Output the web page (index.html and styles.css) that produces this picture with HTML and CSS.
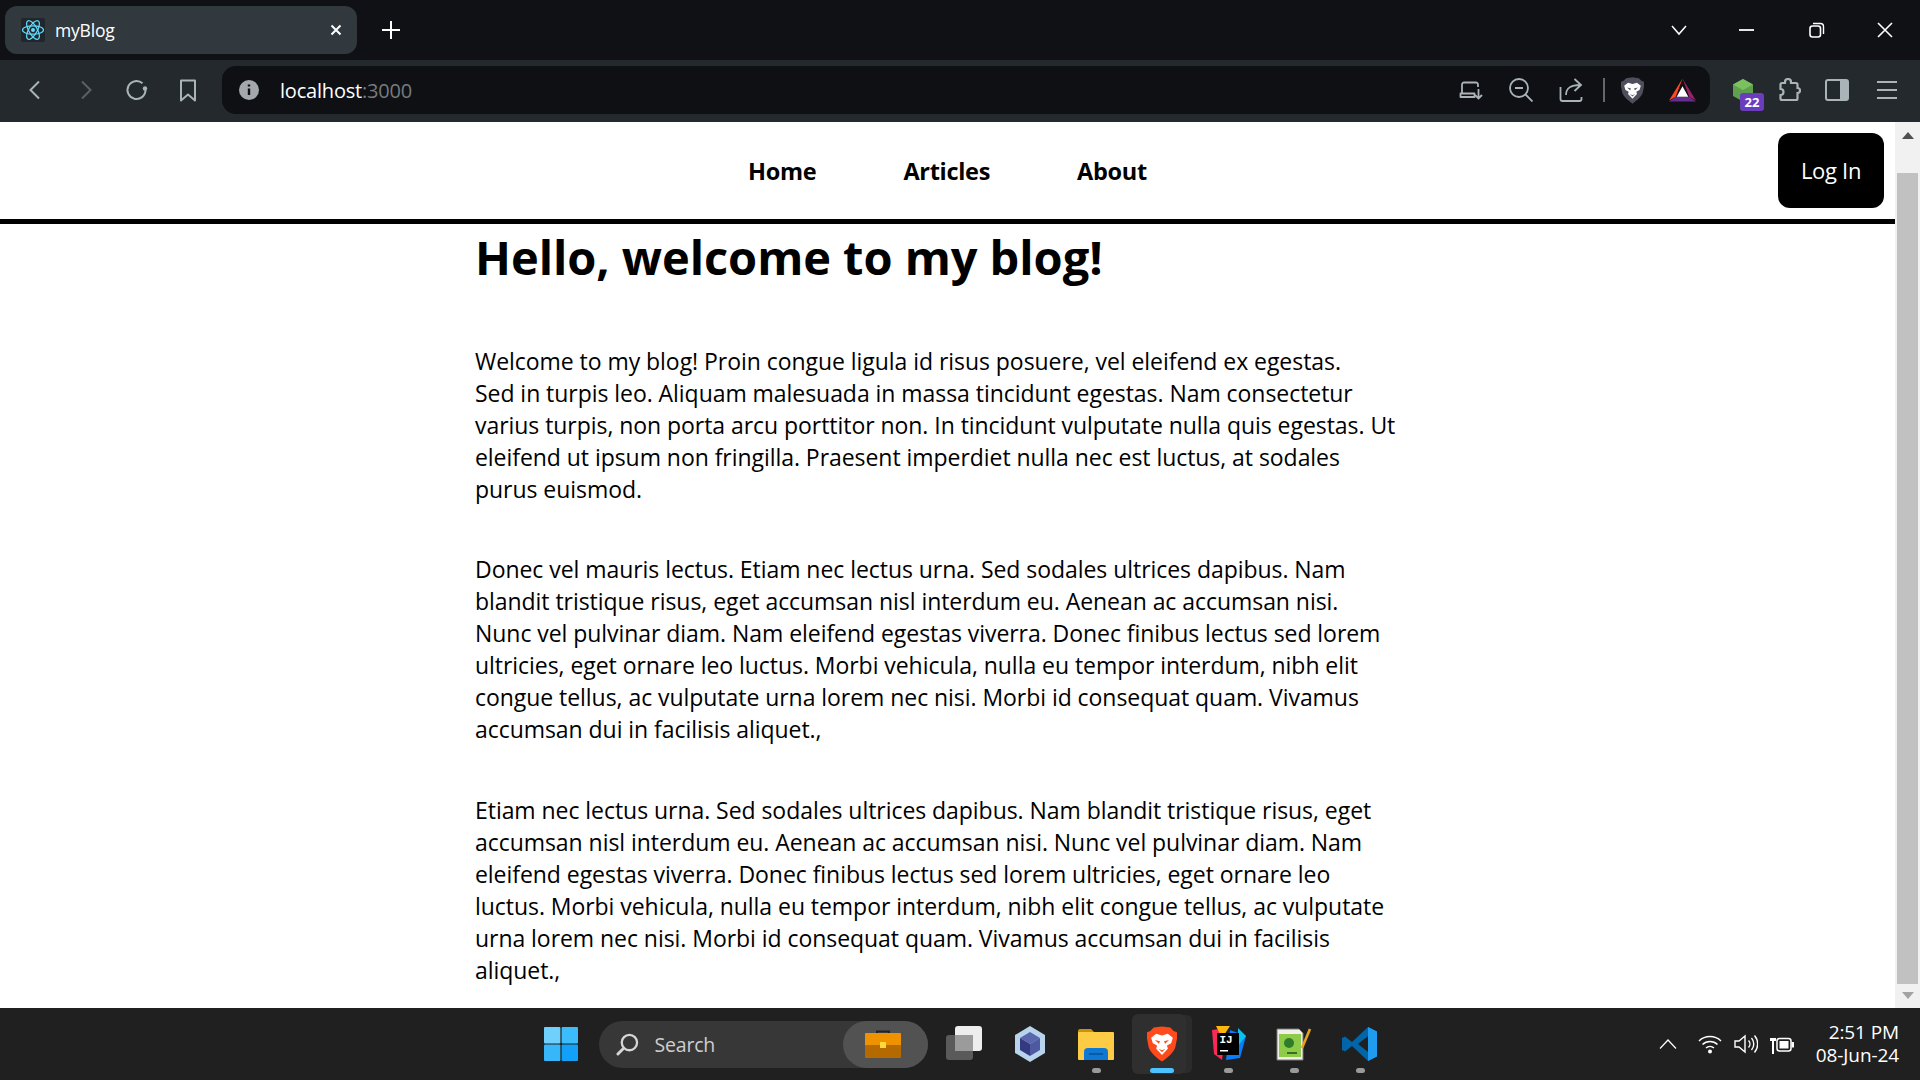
FILE: index.html
```html
<!DOCTYPE html>
<html lang="en">
<head>
    <meta charset="UTF-8">
    <meta name="viewport" content="width=device-width, initial-scale=1.0">
    <title>myBlog</title>
    <link rel="stylesheet" href="styles.css">
</head>
<body>
    <svg class="defs" width="0" height="0">
        <symbol id="lion" viewBox="3 0.500 18 23" preserveAspectRatio="none">
            <path fill="currentColor" d="M7 1.500 12 .8l5 .7 2 2.200 2 .8v4l-1 5.500C19 17.500 15 21 12 23.200 9 21 5 17.500 4 14L3 8.500v-4l2-.8z"/>
            <path fill="#fff" d="M5.500 8l3-2.500L12 6.500l3.500-1 3 2.500-1 3.500-2.500 1.500.5 2L12 19l-3.500-4 .5-2-2.500-1.500z"/>
            <path fill="currentColor" d="M7.800 9.500l3 .8-.7 1.500zM16.200 9.500l-3 .8.7 1.500zM10 15l2 1 2-1-2 2.200z"/>
        </symbol>
    </svg>

    <header class="tabstrip">
        <div class="tab">
            <svg class="favicon" viewBox="0 0 24 24">
                <rect width="24" height="24" rx="2" fill="#20262b"/>
                <g fill="none" stroke="#61dafb" stroke-width="1.200">
                    <ellipse cx="12" cy="12" rx="10.500" ry="4.200"/>
                    <ellipse cx="12" cy="12" rx="10.500" ry="4.200" transform="rotate(60 12 12)"/>
                    <ellipse cx="12" cy="12" rx="10.500" ry="4.200" transform="rotate(120 12 12)"/>
                </g>
                <circle cx="12" cy="12" r="2" fill="#61dafb"/>
            </svg>
            <span class="tab-title">myBlog</span>
            <svg class="tab-close" viewBox="0 0 12 12"><path d="M1.500 1.500l9 9M10.500 1.500l-9 9" stroke="#fff" stroke-width="2"/></svg>
        </div>
        <svg class="new-tab" viewBox="0 0 18 18"><path d="M9 0v18M0 9h18" stroke="#fff" stroke-width="2"/></svg>
        <div class="window-controls">
            <svg class="win-btn tab-list" viewBox="0 0 16 10"><path d="M1 1l7 8 7-8" fill="none" stroke="#fff" stroke-width="1.500"/></svg>
            <svg class="win-btn win-min" viewBox="0 0 16 16"><path d="M0 8h15" stroke="#fff" stroke-width="1.800"/></svg>
            <svg class="win-btn win-max" viewBox="0 0 16 16"><rect x="1" y="4" width="10.500" height="11" rx="2.500" fill="none" stroke="#fff" stroke-width="1.600"/><path d="M4 1.500h7.500A3 3 0 0 1 14.500 4.500V12" fill="none" stroke="#fff" stroke-width="1.400"/></svg>
            <svg class="win-btn win-close" viewBox="0 0 16 16"><path d="M1 1l14 14M15 1L1 15" stroke="#fff" stroke-width="1.600"/></svg>
        </div>
    </header>

    <div class="toolbar">
        <div class="nav-buttons">
            <svg class="tool" viewBox="0 0 24 24"><path d="M16 3.500 7.500 12l8.500 8.500" fill="none" stroke="#a9b3b8" stroke-width="2"/></svg>
            <svg class="tool" viewBox="0 0 24 24"><path d="M8 3.500 16.500 12 8 20.500" fill="none" stroke="#596166" stroke-width="2"/></svg>
            <svg class="tool" viewBox="0 0 24 24"><path d="M20.500 12a9 9 0 1 1-3-6.700" fill="none" stroke="#a9b3b8" stroke-width="2"/><circle cx="20" cy="10.500" r="2.200" fill="#a9b3b8"/></svg>
            <svg class="tool" viewBox="0 0 24 24"><path d="M5 2.500h14v20l-7-6-7 6z" fill="none" stroke="#a9b3b8" stroke-width="2" stroke-linejoin="round"/></svg>
        </div>
        <div class="addressbar">
            <svg class="info" viewBox="0 0 20 20"><circle cx="10" cy="10" r="10" fill="#a3a8ac"/><path d="M10 8.500v6.500M10 4.500v2" stroke="#0e1014" stroke-width="2.400"/></svg>
            <span class="url">localhost<span class="url-port">:3000</span></span>
            <div class="address-actions">
                <svg class="tool" viewBox="0 0 24 24"><path d="M19 9V6.500a2 2 0 0 0-2-2H5a2 2 0 0 0-2 2V15M1.500 15.500h14v3.500h-14z" fill="none" stroke="#a9b3b8" stroke-width="1.800" stroke-linejoin="round"/><path d="M19.500 11v9M16 17l3.500 3.500L23 17" fill="none" stroke="#a9b3b8" stroke-width="1.800"/></svg>
                <svg class="tool" viewBox="0 0 24 24"><circle cx="10" cy="10" r="9" fill="none" stroke="#a9b3b8" stroke-width="1.800"/><path d="M6 10h8M16.500 16.500l7 7" stroke="#a9b3b8" stroke-width="1.800"/></svg>
                <svg class="tool" viewBox="0 0 24 24"><path d="M1.500 9v12a2 2 0 0 0 2 2h17a2 2 0 0 0 2-2v-2M7 17c0-7 5-10 14-10M15.500 1l6.500 6-6.500 6" fill="none" stroke="#a9b3b8" stroke-width="1.800"/></svg>
                <span class="address-divider"></span>
                <svg class="shield"><use href="#lion"/></svg>
                <svg class="bat" viewBox="0 0 28 24">
                    <path fill="#ff4724" d="M14 0 0 23l7-4z"/>
                    <path fill="#9e1f63" d="M14 0l14 23-7-4z"/>
                    <path fill="#662d91" d="M0 24h28l-7-5H7z"/>
                    <path fill="#fff" d="M14 8l6 11H8z"/>
                </svg>
            </div>
        </div>
        <div class="extensions">
            <div class="ext-node">
                <svg class="node-hex" viewBox="0 0 24 24"><path fill="#5fa04e" d="M12 1l10 5.500V18l-10 5.500L2 18V6.500z"/><path fill="#7cc05f" d="M12 1l10 5.500L12 12 2 6.500z"/></svg>
                <span class="ext-badge">22</span>
            </div>
            <svg class="tool ext-puzzle" viewBox="0 0 24 24"><path d="M8 5V4a3 3 0 0 1 6 0v1h5a1.500 1.500 0 0 1 1.500 1.500V10a2.500 2.500 0 0 1 0 5v5.500A1.500 1.500 0 0 1 19 22H5a1.500 1.500 0 0 1-1.500-1.500V17a3 3 0 0 0 0-6V6.500A1.500 1.500 0 0 1 5 5z" fill="none" stroke="#a9b3b8" stroke-width="2.200"/></svg>
            <svg class="tool" viewBox="0 0 24 24"><rect x="1" y="2" width="22" height="20" rx="2" fill="none" stroke="#a9b3b8" stroke-width="2"/><rect x="15" y="2" width="8" height="20" fill="#a9b3b8"/></svg>
            <svg class="tool ext-menu" viewBox="0 0 24 24"><path d="M2 4h20M2 12h20M2 20h20" stroke="#a9b3b8" stroke-width="1.800"/></svg>
        </div>
    </div>

    <div class="viewport">
        <div class="page">
            <nav class="site-nav">
                <div class="nav-links">
                    <a href="#">Home</a>
                    <a href="#">Articles</a>
                    <a href="#">About</a>
                </div>
                <button class="login-btn" type="button">Log In</button>
            </nav>
            <main class="content">
                <h1>Hello, welcome to my blog!</h1>
                <p>Welcome to my blog! Proin congue ligula id risus posuere, vel eleifend ex egestas.<br>
                Sed in turpis leo. Aliquam malesuada in massa tincidunt egestas. Nam consectetur<br>
                varius turpis, non porta arcu porttitor non. In tincidunt vulputate nulla quis egestas. Ut<br>
                eleifend ut ipsum non fringilla. Praesent imperdiet nulla nec est luctus, at sodales<br>
                purus euismod.</p>
                <p>Donec vel mauris lectus. Etiam nec lectus urna. Sed sodales ultrices dapibus. Nam<br>
                blandit tristique risus, eget accumsan nisl interdum eu. Aenean ac accumsan nisi.<br>
                Nunc vel pulvinar diam. Nam eleifend egestas viverra. Donec finibus lectus sed lorem<br>
                ultricies, eget ornare leo luctus. Morbi vehicula, nulla eu tempor interdum, nibh elit<br>
                congue tellus, ac vulputate urna lorem nec nisi. Morbi id consequat quam. Vivamus<br>
                accumsan dui in facilisis aliquet.,</p>
                <p>Etiam nec lectus urna. Sed sodales ultrices dapibus. Nam blandit tristique risus, eget<br>
                accumsan nisl interdum eu. Aenean ac accumsan nisi. Nunc vel pulvinar diam. Nam<br>
                eleifend egestas viverra. Donec finibus lectus sed lorem ultricies, eget ornare leo<br>
                luctus. Morbi vehicula, nulla eu tempor interdum, nibh elit congue tellus, ac vulputate<br>
                urna lorem nec nisi. Morbi id consequat quam. Vivamus accumsan dui in facilisis<br>
                aliquet.,</p>
            </main>
        </div>
        <div class="scrollbar">
            <span class="arrow-up"></span>
            <span class="thumb"></span>
            <span class="arrow-down"></span>
        </div>
    </div>

    <footer class="taskbar">
        <div class="task-center">
            <div class="slot">
                <svg class="icon-34" viewBox="0 0 34 34">
                    <rect width="16.400" height="16.400" rx="1" fill="#6fd0fb"/>
                    <rect x="17.600" width="16.400" height="16.400" rx="1" fill="#3cbcfb"/>
                    <rect y="17.600" width="16.400" height="16.400" rx="1" fill="#38b6fa"/>
                    <rect x="17.600" y="17.600" width="16.400" height="16.400" rx="1" fill="#12a0f8"/>
                </svg>
            </div>
            <div class="search-pill">
                <svg class="search-icon" viewBox="0 0 24 24"><circle cx="14" cy="10" r="8" fill="none" stroke="#d6d6d6" stroke-width="2.400"/><path d="M8 16l-6 6" stroke="#d6d6d6" stroke-width="3" stroke-linecap="round"/></svg>
                <span class="search-text">Search</span>
                <div class="search-badge">
                    <svg class="briefcase" viewBox="0 0 36 28">
                        <path d="M12 4V1.500h12V4" fill="none" stroke="#222" stroke-width="2"/>
                        <rect y="3" width="36" height="13" rx="1" fill="#ee9200"/>
                        <rect y="15" width="36" height="13" rx="1" fill="#b56a00"/>
                        <rect x="15" y="12" width="6" height="6" fill="#ffd83a"/>
                    </svg>
                </div>
            </div>
            <div class="slot">
                <svg class="icon-36" viewBox="0 0 36 36">
                    <rect y="9" width="27" height="25" rx="3" fill="#5a5a5a"/>
                    <rect x="9" width="27" height="25" rx="3" fill="#eee"/>
                    <rect x="9" y="9" width="18" height="16" fill="#9b9b9b"/>
                </svg>
            </div>
            <div class="slot">
                <svg class="icon-36" viewBox="0 0 36 36">
                    <path fill="#b8d4ec" d="M18 0l15 9v18l-15 9-15-9V9z"/>
                    <path fill="#5b67ad" d="M18 6l10 6-10 6-10-6z"/>
                    <path fill="#353a80" d="M8 12l10 6v12l-10-6z"/>
                    <path fill="#4d59a0" d="M28 12l-10 6v12l10-6z"/>
                </svg>
            </div>
            <div class="slot running">
                <svg class="icon-36" viewBox="0 0 36 32">
                    <path fill="#c99400" d="M0 3a2 2 0 0 1 2-2h11l4 4h-17z"/>
                    <rect y="4" width="36" height="28" rx="1" fill="#fdcb44"/>
                    <path fill="#0f78d4" d="M6 32v-8a4 4 0 0 1 4-4h16a4 4 0 0 1 4 4v8z"/>
                    <path d="M11 26h14" stroke="#0a4f94" stroke-width="1.500"/>
                </svg>
            </div>
            <div class="slot active">
                <svg class="brave-tile"><use href="#lion"/></svg>
            </div>
            <div class="slot running">
                <svg class="icon-36" viewBox="0 0 36 36">
                    <path fill="#fe2857" d="M2 4l14-2-4 32-8-6z"/>
                    <path fill="#fdb60d" d="M6 0h14L12 12z"/>
                    <path fill="#087cfa" d="M20 4l16 6-6 22-14 2z"/>
                    <path fill="#07c3f2" d="M28 2l8 8-8 10z"/>
                    <rect x="7" y="7" width="22" height="22" fill="#000"/>
                    <text class="ij-label" x="9.500" y="17">IJ</text>
                    <rect x="10" y="24" width="8" height="1.500" fill="#fff"/>
                </svg>
            </div>
            <div class="slot running">
                <svg class="icon-36" viewBox="0 0 36 36">
                    <path fill="#f1f1ea" stroke="#777" d="M1 3h22l4 4v27H1z"/>
                    <rect x="3" y="8" width="22" height="23" fill="#8ecb48"/>
                    <circle cx="13" cy="17" r="5" fill="#2f7d2a"/>
                    <path d="M26 22L34 3" stroke="#e8a31d" stroke-width="2.600"/>
                    <path d="M11 27h10" stroke="#1d4d1a" stroke-width="1.500"/>
                </svg>
            </div>
            <div class="slot running">
                <svg class="icon-36" viewBox="0 0 36 36">
                    <path fill="#0065a9" d="M26 1l9 4.500v25L26 35 10 20 3 25.500 0 24V12l3-1.500L10 16zM26 10l-10 8 10 8z"/>
                    <path fill="#1f9cf0" d="M26 1l9 4.500v25L26 35z"/>
                </svg>
            </div>
        </div>
        <div class="tray">
            <svg class="tray-chevron" viewBox="0 0 18 10"><path d="M1 9.500l8-8.500 8 8.500" fill="none" stroke="#fff" stroke-width="1.200"/></svg>
            <svg class="tray-icon" viewBox="0 0 24 20"><path d="M1 7a16 16 0 0 1 22 0M4.500 10.500a11 11 0 0 1 15 0M8 14a6 6 0 0 1 8 0" fill="none" stroke="#fff" stroke-width="1.500"/><circle cx="12" cy="17.500" r="2" fill="#fff"/></svg>
            <svg class="tray-icon" viewBox="0 0 24 20"><path d="M1 7v6h4l6 5V2L5 7z" fill="none" stroke="#fff" stroke-width="1.400"/><path d="M14.500 6.500a5 5 0 0 1 0 7M17.500 4a9 9 0 0 1 0 12M20.500 1.500a13 13 0 0 1 0 17" fill="none" stroke="#fff" stroke-width="1.400"/></svg>
            <svg class="tray-icon" viewBox="0 0 24 20"><path d="M1 0v4M4.500 0v4M0 4h6v3H4v13H2V7H0z" fill="#fff"/><rect x="7" y="4.500" width="14" height="12.500" rx="2.500" fill="#202020" stroke="#fff" stroke-width="1.500"/><rect x="9.500" y="7" width="9" height="7.500" fill="#fff"/><rect x="21.500" y="8" width="2.500" height="5.500" fill="#fff"/></svg>
            <div class="clock">
                <span>2:51 PM</span>
                <span>08-Jun-24</span>
            </div>
        </div>
    </footer>
</body>
</html>
```

FILE: styles.css
```css
html, body {
    height: 100%;
    margin: 0;
}
body {
    font-family: "Open Sans", "Noto Sans", sans-serif;
    display: flex;
    flex-direction: column;
    height: 100vh;
    overflow: hidden;
    background: #fff;
}
.defs {
    position: absolute;
}
svg {
    display: block;
    flex: none;
}

/* browser top */
.tabstrip {
    height: 60px;
    flex: none;
    display: flex;
    align-items: flex-start;
    background: #0f1115;
    box-sizing: border-box;
    padding: 6px 0 0 5px;
}
.tab {
    width: 352px;
    height: 48px;
    border-radius: 12px;
    background: #32393e;
    display: flex;
    align-items: center;
    padding: 0 16px;
    box-sizing: border-box;
    color: #fff;
}
.favicon {
    width: 24px;
    height: 24px;
}
.tab-title {
    margin-left: 10px;
    font-size: 17.500px;
    letter-spacing: -0.2px;
}
.tab-close {
    width: 12px;
    height: 12px;
    margin-left: auto;
    margin-right: -1px;
}
.new-tab {
    width: 18px;
    height: 18px;
    margin: 15px 0 0 25px;
}
.window-controls {
    margin-left: auto;
    display: flex;
    align-items: center;
    height: 48px;
    padding-right: 27px;
}
.win-btn {
    width: 16px;
    height: 16px;
}
.tab-list {
    margin-right: 52px;
}
.win-min {
    margin-right: 54px;
}
.win-max {
    margin-right: 52px;
}

/* toolbar */
.toolbar {
    height: 62px;
    flex: none;
    display: flex;
    align-items: center;
    box-sizing: border-box;
    padding-bottom: 2px;
    background: #23292d;
}
.tool {
    width: 24px;
    height: 24px;
}
.nav-buttons {
    display: flex;
    gap: 27px;
    padding-left: 23px;
    width: 222px;
    box-sizing: border-box;
}
.addressbar {
    width: 1488px;
    height: 48px;
    border-radius: 14px;
    background: #0e1014;
    display: flex;
    align-items: center;
    padding-left: 17px;
    box-sizing: border-box;
}
.info {
    width: 20px;
    height: 20px;
}
.url {
    margin-left: 21px;
    font-size: 20px;
    letter-spacing: -0.2px;
    color: #fff;
}
.url-port {
    color: #777b7f;
}
.address-actions {
    margin-left: auto;
    display: flex;
    align-items: center;
    gap: 26px;
    padding-right: 14px;
}
.address-divider {
    width: 2px;
    height: 24px;
    background: #62686c;
    margin: 0 -10px 0 -6px;
}
.shield {
    width: 23px;
    height: 27px;
    color: #4d4f5c;
}
.bat {
    width: 27px;
    height: 24px;
    margin-left: -1px;
}
.extensions {
    display: flex;
    align-items: center;
    gap: 24px;
    padding-left: 21px;
}
.ext-puzzle {
    margin-left: -2px;
}
.ext-menu {
    margin-left: 2px;
}
.ext-node {
    position: relative;
    width: 24px;
    height: 24px;
}
.node-hex {
    width: 24px;
    height: 24px;
}
.ext-badge {
    position: absolute;
    left: 9px;
    top: 15px;
    width: 24px;
    height: 18px;
    border-radius: 3px;
    background: #6a3dbd;
    color: #fff;
    font-size: 13px;
    font-weight: 700;
    line-height: 18px;
    text-align: center;
}

/* page */
.viewport {
    flex: 1;
    min-height: 0;
    display: flex;
}
.page {
    flex: 1;
    min-width: 0;
    overflow: hidden;
    color: #000;
}
.site-nav {
    height: 102px;
    box-sizing: border-box;
    border-bottom: 5px solid #000;
    position: relative;
    display: flex;
    justify-content: center;
    align-items: center;
}
.nav-links {
    display: flex;
    gap: 87px;
}
.nav-links a {
    color: #000;
    font-size: 23.500px;
    font-weight: 700;
    text-decoration: none;
    letter-spacing: -0.3px;
}
.login-btn {
    position: absolute;
    right: 11px;
    top: 11px;
    width: 106px;
    height: 75px;
    padding: 0 0 2px;
    border: none;
    border-radius: 12px;
    background: #000;
    color: #fff;
    font-family: inherit;
    font-size: 22px;
    letter-spacing: -0.3px;
}
.content {
    margin-left: 475px;
}
.content h1 {
    margin: 1px 0 56px;
    font-size: 47px;
    line-height: 64px;
    font-weight: 700;
    letter-spacing: -0.05px;
    white-space: nowrap;
}
.content p {
    margin: 0 0 49px;
    font-size: 23px;
    line-height: 32px;
    letter-spacing: -0.05px;
    white-space: nowrap;
}
.content h1 + p {
    margin-bottom: 48px;
}

/* fake scrollbar */
.scrollbar {
    width: 25px;
    flex: none;
    background: #f1f1f1;
    display: flex;
    flex-direction: column;
    align-items: center;
    padding-top: 10px;
    box-sizing: border-box;
}
.arrow-up {
    border: 6px solid transparent;
    border-top: none;
    border-bottom: 7px solid #505050;
}
.thumb {
    width: 21px;
    height: 811px;
    margin-top: 34px;
    background: #c1c1c1;
}
.arrow-down {
    margin-top: 8px;
    border: 6px solid transparent;
    border-bottom: none;
    border-top: 7px solid #a3a3a3;
}

/* windows taskbar */
.taskbar {
    height: 72px;
    flex: none;
    display: grid;
    grid-template-columns: 1fr auto 1fr;
    align-items: center;
    background: #202020;
    color: #fff;
}
.task-center {
    grid-column: 2;
    display: flex;
    align-items: center;
}
.slot {
    width: 66px;
    height: 60px;
    display: flex;
    align-items: center;
    justify-content: center;
    position: relative;
}
.icon-34 {
    width: 34px;
    height: 34px;
}
.icon-36 {
    width: 36px;
    height: 36px;
}
.running::after,
.active::after {
    content: "";
    position: absolute;
    bottom: 1px;
    left: 50%;
    width: 9px;
    height: 5px;
    margin-left: -4px;
    border-radius: 3px;
    background: #9a9a9a;
}
.active {
    width: 54px;
    margin: 0 9px 0 3px;
    padding-left: 6px;
    box-sizing: border-box;
    height: 60px;
    border-radius: 6px;
    background: #2f2f2f;
    box-shadow: 7px 0 0 -1px #2b2b2b;
}
.active::after {
    width: 24px;
    margin-left: -9px;
    background: #4cc2ff;
}
.brave-tile {
    width: 30px;
    height: 36px;
    color: #ff4a1c;
}
.search-pill {
    width: 329px;
    height: 47px;
    margin: 0 3px 0 5px;
    border-radius: 24px;
    background: #373737;
    display: flex;
    align-items: center;
    padding-left: 17px;
    box-sizing: border-box;
}
.search-icon {
    width: 23px;
    height: 23px;
}
.search-text {
    margin-left: 16px;
    font-size: 19.500px;
    letter-spacing: -0.2px;
    color: #cfcfcf;
}
.search-badge {
    margin-left: auto;
    width: 85px;
    height: 47px;
    border-radius: 24px;
    background: #525252;
    display: flex;
    align-items: center;
    justify-content: center;
}
.briefcase {
    width: 36px;
    height: 28px;
    margin-left: -4px;
}
.ij-label {
    fill: #fff;
    font-family: "Liberation Mono", monospace;
    font-size: 11px;
    font-weight: 700;
}
.tray {
    grid-column: 3;
    display: flex;
    align-items: center;
    justify-content: flex-end;
    padding-right: 21px;
}
.tray-chevron {
    width: 18px;
    height: 10px;
    margin-right: 21px;
}
.tray-icon {
    width: 24px;
    height: 20px;
    margin-right: 12px;
}
.clock {
    display: flex;
    flex-direction: column;
    align-items: flex-end;
    margin-left: 10px;
    font-size: 19px;
    line-height: 23px;
    letter-spacing: -0.1px;
}
```
